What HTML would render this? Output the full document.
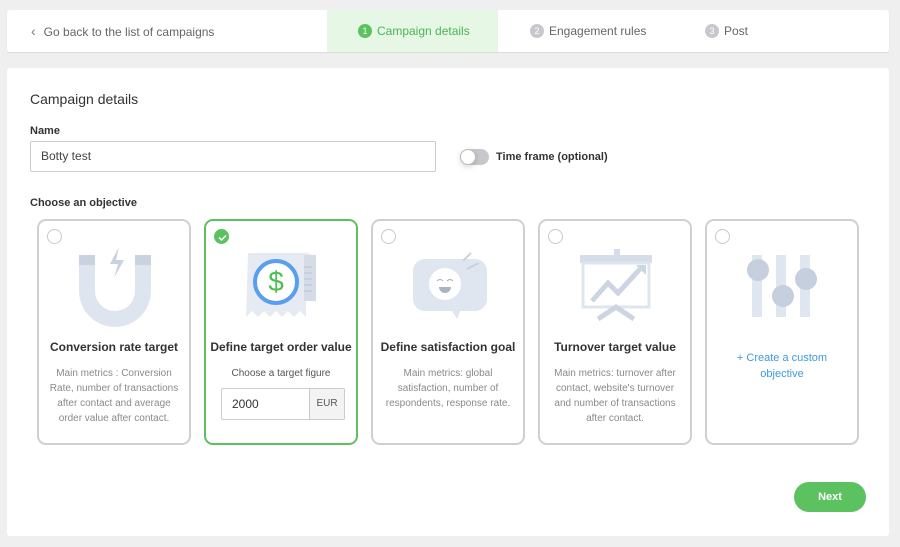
<!DOCTYPE html>
<html><head><meta charset="utf-8"><style>
*{box-sizing:border-box;margin:0;padding:0}
body{width:900px;height:547px;background:#efefef;font-family:"Liberation Sans",sans-serif;position:relative;overflow:hidden;color:#333}
.top{position:absolute;left:7px;top:10px;width:882px;height:42px;background:#fff;border-radius:3px;box-shadow:0 1px 1px rgba(0,0,0,.08)}
.tab{position:absolute;top:0;height:42px;line-height:42px;font-size:12px;color:#666}
.num{display:inline-block;width:14px;height:14px;border-radius:7px;background:#c8c8cc;color:#fff;font-size:9px;line-height:14px;text-align:center;margin-right:5px;vertical-align:1px}
.main{position:absolute;left:7px;top:68px;width:882px;height:468px;background:#fff;border-radius:3px}
.abs{position:absolute}
.card{position:absolute;top:219px;width:154px;height:226px;border:2px solid #cfd0d4;border-radius:9px;background:#fff;text-align:center}
.card.sel{border-color:#5cc15f}
.radio{position:absolute;left:8px;top:8px;width:15px;height:15px;border:1px solid #c8c8cc;border-radius:50%}
.t{position:absolute;left:0;right:0;top:119px;font-size:12px;font-weight:bold;color:#333}
.d{position:absolute;left:8px;right:8px;top:145px;font-size:10px;line-height:15px;color:#8a8a8a}
svg{position:absolute;left:0;top:0}
</style></head><body>
<div class="top">
 <div class="tab" style="left:24px"><span style="font-size:14px;color:#777;margin-right:8px">&#x2039;</span>Go back to the list of campaigns</div>
 <div class="tab" style="left:320px;width:171px;background:#e6f7e6;color:#4bb54f;padding-left:31px"><span class="num" style="background:#5cc15f">1</span>Campaign details</div>
 <div class="tab" style="left:523px"><span class="num">2</span>Engagement rules</div>
 <div class="tab" style="left:698px"><span class="num">3</span>Post</div>
</div>
<div class="main"></div>
<div class="abs" style="left:30px;top:91px;font-size:14px;color:#333">Campaign details</div>
<div class="abs" style="left:30px;top:125px;font-size:11px;font-weight:bold;color:#333">Name</div>
<div class="abs" style="left:30px;top:141px;width:406px;height:31px;border:1px solid #ccc;border-radius:2px;font-size:12px;line-height:29px;padding-left:10px;color:#444">Botty test</div>
<div class="abs" style="left:460px;top:149px;width:29px;height:16px;border-radius:8px;background:#c8c8cc"></div>
<div class="abs" style="left:460px;top:149px;width:16px;height:16px;border-radius:8px;background:#fff;border:1px solid #bbb;box-shadow:0 2px 6px rgba(0,0,0,.15)"></div>
<div class="abs" style="left:496px;top:151px;font-size:11px;font-weight:bold;color:#333">Time frame (optional)</div>
<div class="abs" style="left:30px;top:197px;font-size:11px;font-weight:bold;color:#333">Choose an objective</div>

<div class="card" style="left:37px"><div class="radio"></div>
<svg width="154" height="110"><g fill="#dfe5ef"><path d="M40 34h16v36a20 20 0 0 0 40 0V34h16v36a36 36 0 0 1-72 0z"/></g><rect x="40" y="34" width="16" height="10" fill="#c9d2e0"/><rect x="96" y="34" width="16" height="10" fill="#c9d2e0"/><path d="M80 26l-9 17h8l-4 14 10-18h-8z" fill="#c9d2e0"/></svg>
<div class="t">Conversion rate target</div><div class="d">Main metrics : Conversion Rate, number of transactions after contact and average order value after contact.</div></div>

<div class="card sel" style="left:204px"><div class="radio" style="background:#5cc15f;border-color:#5cc15f"><svg width="15" height="15"><path d="M4 7.5l2.5 2.5 4.5-4.5" stroke="#fff" stroke-width="1.5" fill="none"/></svg></div>
<svg width="154" height="110"><path d="M42 32h58a10 10 0 0 1 10 10v36h-10v18l-6-6-6 6-6-6-6 6-6-6-6 6-6-6-6 6-6-6-6 6z" fill="#e6ebf3"/><rect x="98" y="34" width="12" height="46" fill="#d5dce8"/><g stroke="#b8c2d2"><path d="M98 46h8M98 52h8M98 58h8M98 64h8M98 70h8"/></g><circle cx="70" cy="61" r="21" fill="#fff" stroke="#5a9ef0" stroke-width="4"/><text x="70" y="70" font-size="28" fill="#4bbf4f" text-anchor="middle" font-family="Liberation Sans">$</text></svg>
<div class="t">Define target order value</div>
<div class="abs" style="left:0;right:0;top:147px;font-size:10px;color:#555">Choose a target figure</div>
<div class="abs" style="left:15px;top:167px;width:124px;height:32px;border:1px solid #ccc;border-radius:2px;text-align:left"><span style="position:absolute;left:10px;top:8px;font-size:12px;color:#333">2000</span><span style="position:absolute;right:0;top:0;width:35px;height:30px;background:#f3f3f3;border-left:1px solid #ccc;font-size:10px;line-height:30px;text-align:center;color:#555">EUR</span></div></div>

<div class="card" style="left:371px"><div class="radio"></div>
<svg width="154" height="110"><rect x="40" y="38" width="74" height="52" rx="12" fill="#e0e6ef"/><path d="M78 88l6 10 4-10z" fill="#e0e6ef"/><circle cx="72" cy="63" r="16" fill="#fff"/><path d="M64 60q3-3 6 0M74 60q3-3 6 0" stroke="#aab" fill="none"/><path d="M66 66h12a6 6 0 0 1-12 0z" fill="#aab3c2"/><path d="M90 40l8-8M94 48l12-6" stroke="#c9d2e0" stroke-width="2"/></svg>
<div class="t">Define satisfaction goal</div><div class="d">Main metrics: global satisfaction, number of respondents, response rate.</div></div>

<div class="card" style="left:538px"><div class="radio"></div>
<svg width="154" height="110"><rect x="40" y="34" width="72" height="8" fill="#d6dde8"/><rect x="74" y="28" width="6" height="8" fill="#d6dde8"/><rect x="43" y="42" width="66" height="44" fill="none" stroke="#dfe5ef" stroke-width="3"/><path d="M52 80l16-18 10 10 22-24" stroke="#cdd5e2" stroke-width="5" fill="none"/><path d="M96 44h10v10z" fill="#cdd5e2"/><path d="M58 98l18-12 18 12" stroke="#cdd5e2" stroke-width="5" fill="none"/></svg>
<div class="t">Turnover target value</div><div class="d">Main metrics: turnover after contact, website's turnover and number of transactions after contact.</div></div>

<div class="card" style="left:705px"><div class="radio"></div>
<svg width="154" height="110"><g fill="#e0e6ef"><rect x="45" y="34" width="10" height="62"/><rect x="69" y="34" width="10" height="62"/><rect x="93" y="34" width="10" height="62"/></g><g fill="#c6cfdd"><circle cx="51" cy="49" r="11"/><circle cx="76" cy="75" r="11"/><circle cx="99" cy="58" r="11"/></g></svg>
<div class="abs" style="left:0;right:0;top:129px;font-size:11px;line-height:16px;color:#3d9be0">+ Create a custom<br>objective</div></div>

<div class="abs" style="left:794px;top:482px;width:72px;height:30px;border-radius:15px;background:#5cc15f;color:#fff;font-size:11px;font-weight:bold;text-align:center;line-height:30px">Next</div>
</body></html>
